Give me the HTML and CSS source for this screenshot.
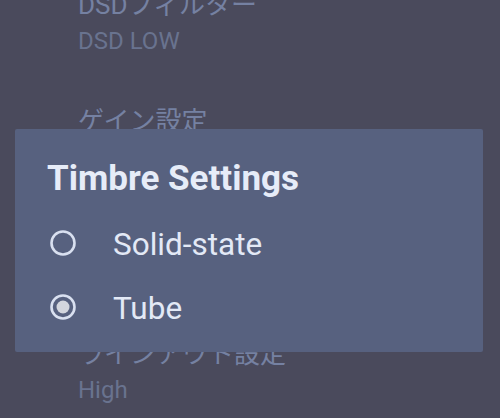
FILE: index.html
```html
<!DOCTYPE html>
<html lang="ja">
<head>
<meta charset="utf-8">
<title>Timbre Settings</title>
<link rel="stylesheet" href="styles.css">
</head>
<body>
<div class="screen">
  <ul class="settings">
    <li class="item">
      <div class="item-title">DSDフィルター</div>
      <div class="item-sub">DSD LOW</div>
    </li>
    <li class="item">
      <div class="item-title">ゲイン設定</div>
    </li>
    <li class="item" aria-hidden="true"></li>
    <li class="item">
      <div class="item-title">ラインアウト設定</div>
      <div class="item-sub">High</div>
    </li>
  </ul>

  <div class="dialog" role="dialog" aria-label="Timbre Settings">
    <div class="dialog-title">Timbre Settings</div>
    <div class="option">
      <svg class="radio" viewBox="0 0 26 26" width="26" height="26" aria-hidden="true">
        <circle cx="13" cy="13" r="11.5" fill="none" stroke="#d9e0f0" stroke-width="2.6"/>
      </svg>
      <span class="option-label">Solid-state</span>
    </div>
    <div class="option">
      <svg class="radio" viewBox="0 0 26 26" width="26" height="26" aria-hidden="true">
        <circle cx="13" cy="13" r="11.5" fill="none" stroke="#d9e0f0" stroke-width="2.6"/>
        <circle cx="13" cy="13" r="6.5" fill="#d3d6de"/>
      </svg>
      <span class="option-label">Tube</span>
    </div>
  </div>
</div>
</body>
</html>
```

FILE: styles.css
```css
html, body {
  margin: 0;
  padding: 0;
  background: #4a4a5c;
}

.screen {
  position: relative;
  width: 500px;
  height: 418px;
  overflow: hidden;
  background: #4a4a5c;
  font-family: Roboto, "Noto Sans CJK JP", sans-serif;
}

.settings {
  list-style: none;
  margin: -13px 0 0 0;
  padding: 0 0 0 78px;
  display: grid;
  grid-auto-rows: 116.33px;
}

.item-title {
  font-size: 26px;
  line-height: 36px;
  color: #7581a2;
  white-space: nowrap;
}

.item-sub {
  font-size: 24px;
  line-height: 36px;
  color: #69738f;
  white-space: nowrap;
}

.dialog {
  position: absolute;
  left: 15px;
  top: 129px;
  width: 468px;
  height: 223px;
  box-sizing: border-box;
  padding: 30px 0 0 32px;
  background: #57617f;
  border-radius: 2px;
  color: #e6ecf8;
}

.dialog-title {
  font-size: 35px;
  line-height: 40px;
  font-weight: 700;
  margin-bottom: 14px;
  white-space: nowrap;
}

.option {
  display: flex;
  align-items: center;
  height: 64px;
}

.radio {
  display: block;
  margin: -4px 0 0 3px;
  flex: none;
}

.option-label {
  margin-left: 37px;
  font-size: 31.5px;
  line-height: 64px;
  color: #e3e9f6;
  white-space: nowrap;
}
```
